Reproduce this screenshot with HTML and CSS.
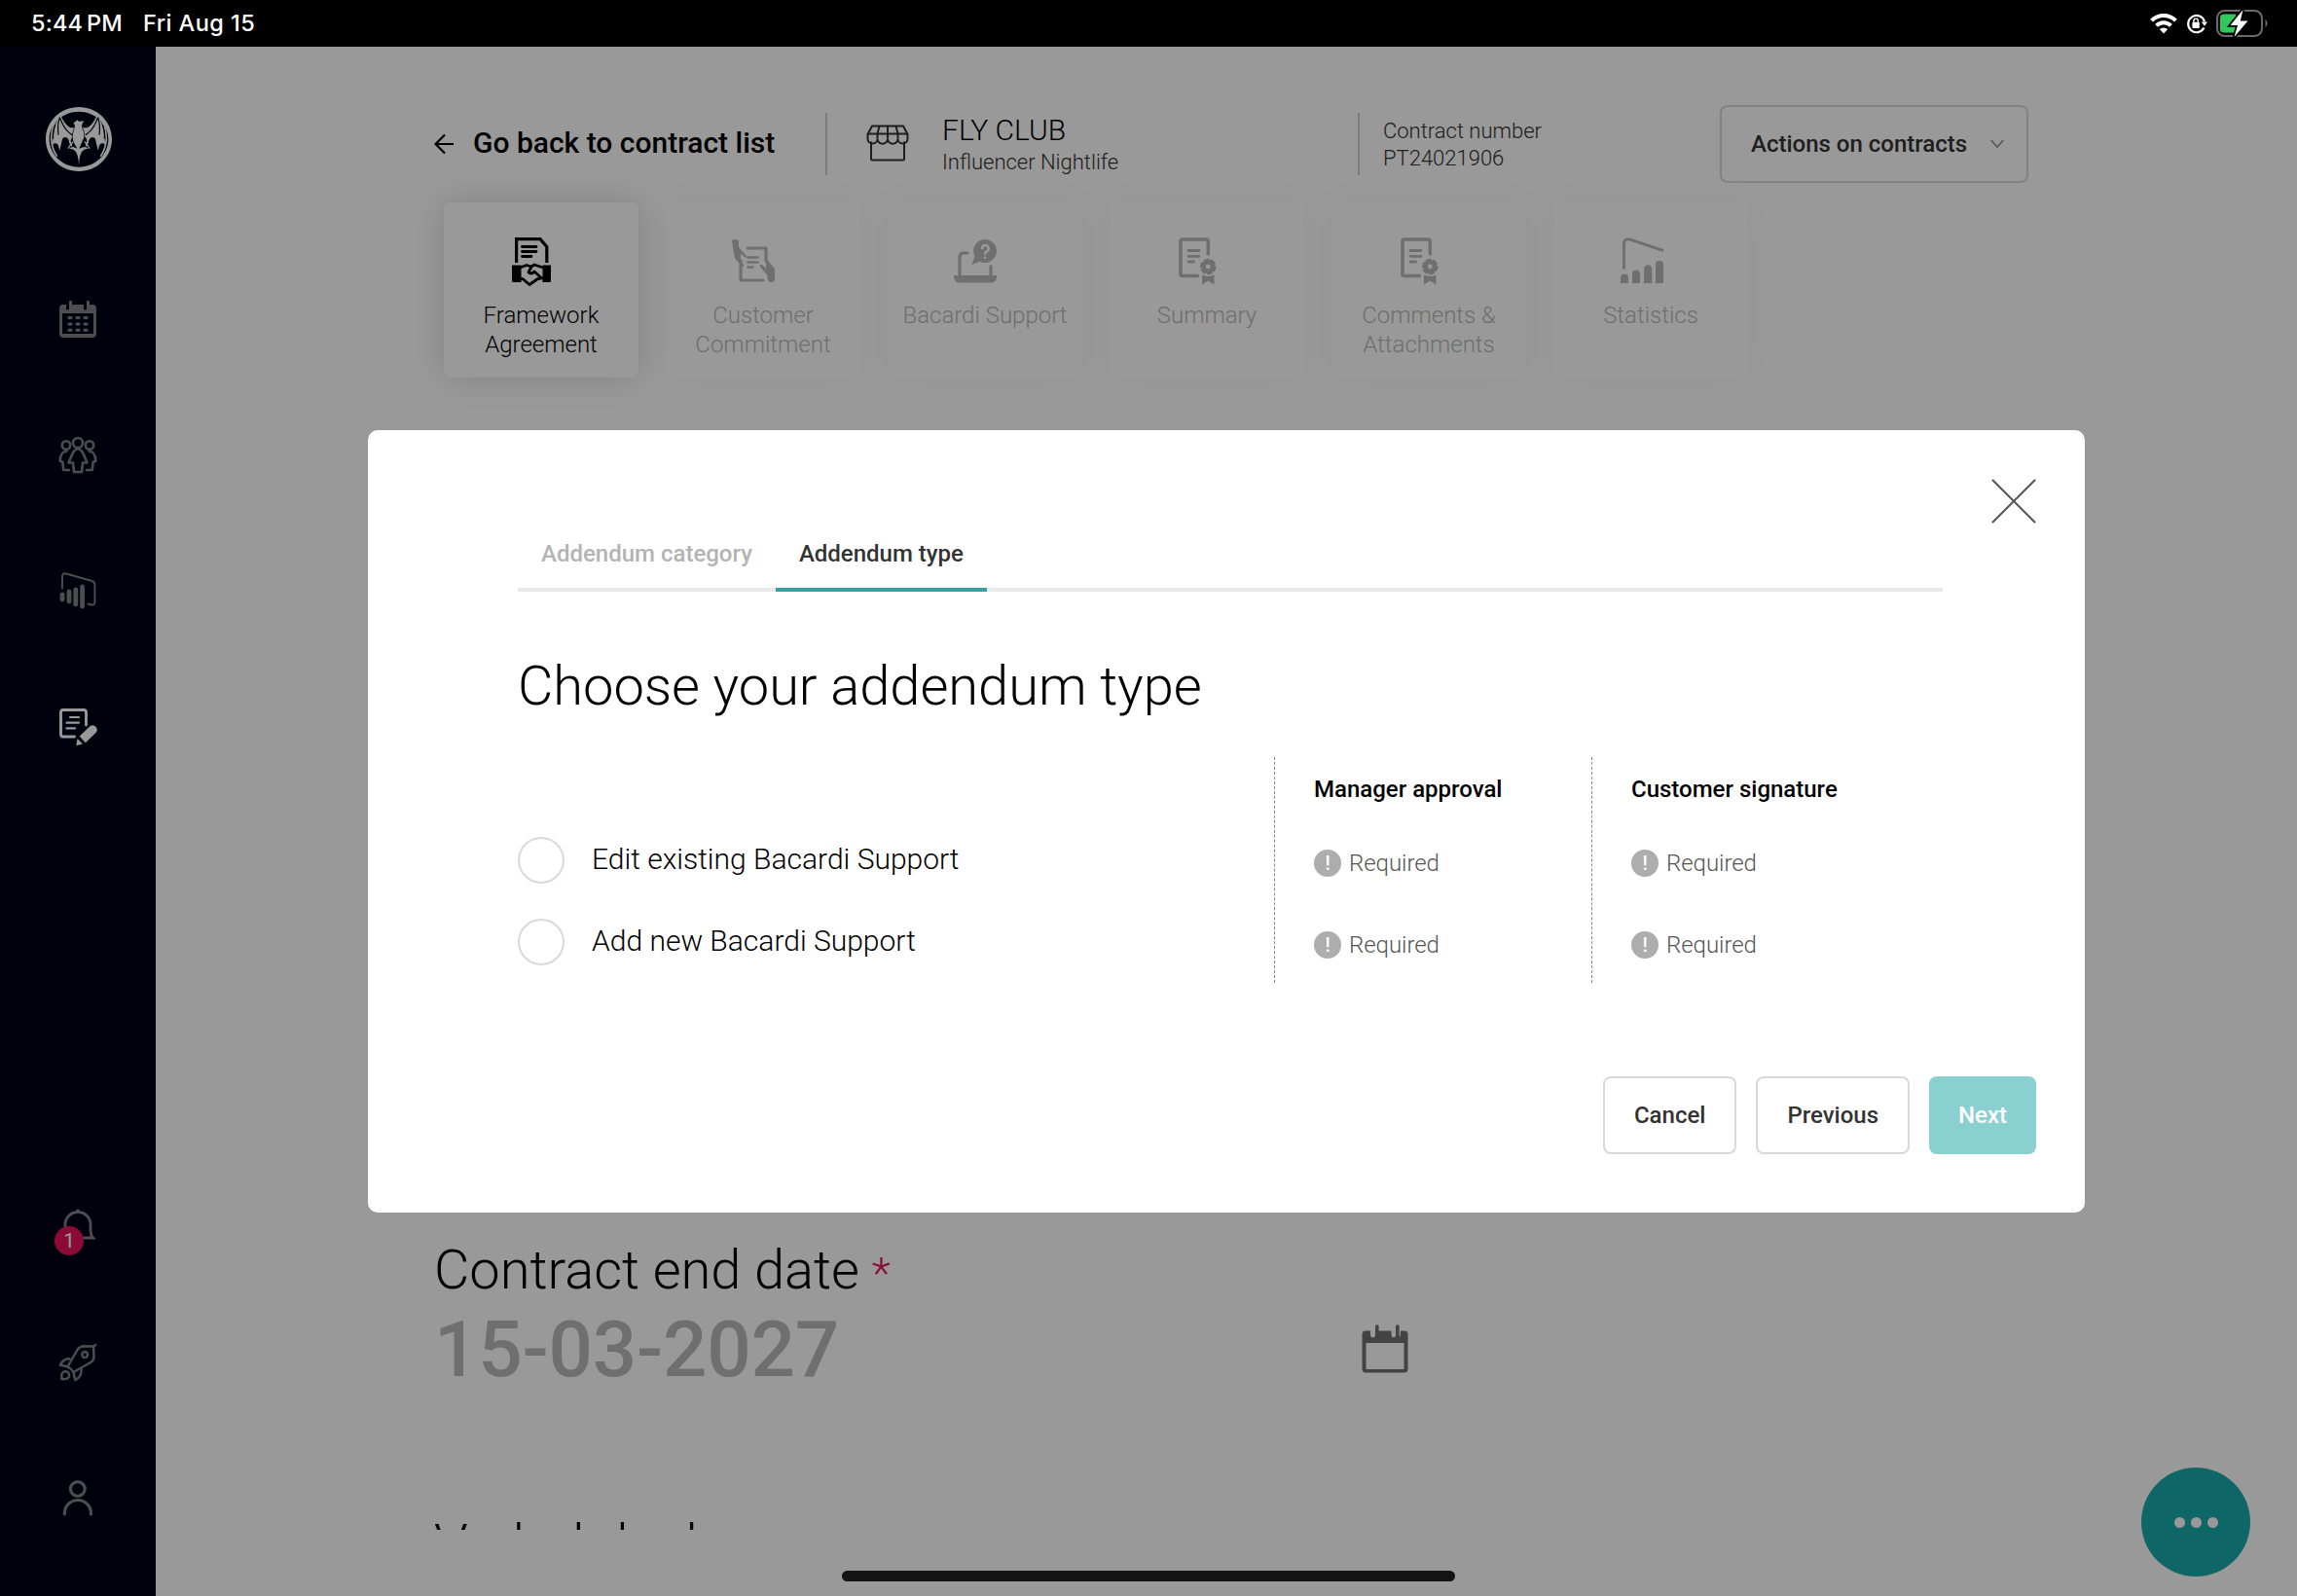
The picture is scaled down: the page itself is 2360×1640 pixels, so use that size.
FILE: index.html
```html
<!DOCTYPE html>
<html lang="en">
<head>
<meta charset="utf-8">
<title>Contract</title>
<link rel="stylesheet" href="styles.css">
</head>
<body>
<header class="status">
  <div class="status-left"><span class="status-time">5:44<i class="thin"></i>PM</span><span class="status-date">Fri Aug 15</span></div>
  <div class="status-right">
    <svg class="wifi" viewBox="0 0 28 22" width="28" height="22"><g fill="none" stroke="#fff" stroke-width="4"><path d="M1.6 8.2a17.6 17.6 0 0 1 24.8 0"/><path d="M6.6 13.4a10.4 10.4 0 0 1 14.8 0"/></g><path d="M14 21.5l-4.2-4.4a6 6 0 0 1 8.4 0z" fill="#fff"/></svg>
    <svg class="lock" viewBox="0 0 22 22" width="22" height="22"><path d="M18.4 15.6a8.6 8.6 0 1 1 .6-6.5" fill="none" stroke="#fff" stroke-width="2.2"/><path d="M15.8 9.6h6.2l-3 4.2z" fill="#fff"/><rect x="6.4" y="9.8" width="7.4" height="6.2" rx="1" fill="#fff"/><path d="M7.9 10V8.3a2.2 2.2 0 0 1 4.4 0V10" fill="none" stroke="#fff" stroke-width="1.4"/></svg>
    <svg class="battery" viewBox="0 0 54 30" width="54" height="30"><rect x="1" y="2" width="46" height="26" rx="7.500" fill="none" stroke="#6b6b6b" stroke-width="2"/><path d="M50.500 10.500q4 4.500 0 9z" fill="#6b6b6b"/><path d="M8 5.500H20v19H8Q4 24.500 4 20.500V9.500Q4 5.500 8 5.500z" fill="#34c759"/><path d="M27.500 1L14.500 17h7.500l-3.500 12 14-16.500h-7.700z" fill="#fff" stroke="#000" stroke-width="3.500" paint-order="stroke"/></svg>
  </div>
</header>

<div class="app">
  <nav class="sidebar">
    <svg class="logo" viewBox="141 330 204 198" width="68" height="66">
      <path fill="#fff" fill-rule="evenodd" d="M243 330c56 0 102 44 102 99s-46 99-102 99-102-44-102-99 46-99 102-99zM243 344c-50 0-91 38-91 85s41 86 91 86 91-39 91-86-41-85-91-85z"/>
      <path fill="none" stroke="#fff" stroke-width="5" d="M184 356q-26 28-26 72 2 32 18 54M302 356q26 28 26 72-2 32-18 54"/>
      <g fill="#fff"><path d="M186 354q14 30 28 38 10 4 18 0l-2 30q-8-6-12 12l6 20q-10-4-12-22-6-12-14-8-6 0-8 14l-6 26q-4-22-12-22-6-2-10 4-2-52 24-92z"/><path d="M300 354q-14 30-28 38-10 4-18 0l2 30q8-6 12 12l-6 20q10-4 12-22 6-12 14-8 6 0 8 14l6 26q4-22 12-22 6-2 10 4 2-52-24-92z"/>
      <path stroke="#00020d" stroke-width="4" paint-order="stroke" d="M226 380l12-10 6 5 14-3-6 14 2 12q8 12 4 28l-7 16-7 16q20-10 28 0-18 2-22 14-6 14-7 38-1-24-7-38-4-12-22-14 8-10 24 0l-10-18q-9-20 1-42l2-12z"/></g>
      <path fill="none" stroke="#00020d" stroke-width="3.500" d="M184 362q-8 24-4 54M184 362q12 30 24 42t15 12M302 362q8 24 4 54M302 362q-12 30-24 42t-15 12M170 384q-8 26-6 44M316 384q8 26 6 44"/>
      <path fill="none" stroke="#fff" stroke-width="4" d="M226 436l-8 10-8 12M260 436l8 10 8 12"/>
    </svg>
    <div class="nav-main">
      <svg class="nav-icon" viewBox="0 0 40 40"><path fill="currentColor" fill-rule="evenodd" d="M5 5h3v4a1.500 1.500 0 0 0 3 0V1h3v4h12v4a1.500 1.500 0 0 0 3 0V1h3v4h3a4 4 0 0 1 4 4v26a4 4 0 0 1-4 4H5a4 4 0 0 1-4-4V9a4 4 0 0 1 4-4zM4 14v21h32V14z"/><g fill="currentColor"><ellipse cx="12" cy="18.500" rx="2.800" ry="1.700"/><ellipse cx="20" cy="18.500" rx="2.800" ry="1.700"/><ellipse cx="28" cy="18.500" rx="2.800" ry="1.700"/><ellipse cx="12" cy="25" rx="2.800" ry="1.700"/><ellipse cx="20" cy="25" rx="2.800" ry="1.700"/><ellipse cx="28" cy="25" rx="2.800" ry="1.700"/><ellipse cx="12" cy="31.200" rx="2.800" ry="1.700"/><ellipse cx="20" cy="31.200" rx="2.800" ry="1.700"/><ellipse cx="28" cy="31.200" rx="2.800" ry="1.700"/></g></svg>
      <svg class="nav-icon" viewBox="0 0 40 40"><g fill="none" stroke="currentColor" stroke-width="2.600" stroke-linecap="round" stroke-linejoin="round"><circle cx="20" cy="7" r="5"/><circle cx="8" cy="9.500" r="4.200"/><circle cx="32" cy="9.500" r="4.200"/><path d="M20 13.200c-3.200 0-4.500 2.300-6 6L10.500 27.500h4.500L16 37h8l1-9.500h4.500L26 19.200c-1.500-3.700-2.800-6-6-6z"/><path d="M8.500 15.500C4 16 2 18.500 1.700 25.500l2.600 1.200L5.300 35H11M31.500 15.500c4.500.5 6.500 3 6.800 10l-2.600 1.200L34.700 35H29"/></g></svg>
      <svg class="nav-icon" viewBox="0 0 40 40"><path fill="none" stroke="currentColor" stroke-width="1.900" stroke-linecap="round" d="M4 17.500V5.500Q4 1.500 8 2.500L34.500 10Q37.400 11 37.400 14V32Q37.400 36.200 30.500 33.500"/><g stroke="currentColor" stroke-width="4.800" stroke-linecap="round"><path d="M4 24v5M11 21v10M17.800 19v15M24.600 16v20"/></g></svg>
      <svg class="nav-icon active" viewBox="0 0 40 40"><path fill="none" stroke="currentColor" stroke-width="2.900" stroke-linecap="round" d="M28.500 18V5q0-2.500-2.500-2.500H5Q2.500 2.500 2.500 5v22.500Q2.500 30 5 30h11.500"/><path stroke="currentColor" stroke-width="2.200" stroke-linecap="round" d="M12 10h9M8.500 15.700H21M8.500 21.400H17"/><path fill="currentColor" d="M21.700 29.500L32.200 19.500a4.500 4.500 0 0 1 6.200 6.500L27.800 36.200zM19.500 32l5.500 5.500-6.700 1.500z"/></svg>
    </div>
    <div class="nav-foot">
      <div class="bell"><svg class="nav-icon" viewBox="0 0 40 40"><path fill="none" stroke="currentColor" stroke-width="2.800" d="M20 2.500V6M6 32h29.500q-2.300-2.500-2.500-8V18.500a13 13 0 0 0-26 0V24q0 5-1 8z"/></svg><span class="badge">1</span></div>
      <svg class="nav-icon" viewBox="0 0 40 40"><g fill="none" stroke="currentColor" stroke-width="2.500" stroke-linejoin="round"><path d="M9.500 24.500L19.500 7Q22 3.300 26 3.200L36 3.500 36.500 14Q36.500 18 33 20L15.500 30Q13.500 26.500 9.500 24.500z"/><path d="M36 3.500L39 1.500M12.500 16.500Q6 15 1.800 22.500L9.500 24.500M15.500 30Q16 34 17.500 38 24.500 34.500 23.500 26"/><circle cx="27.200" cy="12" r="2.900"/><path d="M3.300 37v-4a3.900 3.900 0 1 1 3.900 4z"/></g></svg>
      <svg class="nav-icon" viewBox="0 0 40 40"><g fill="none" stroke="currentColor" stroke-width="3.200" stroke-linecap="round"><circle cx="19.800" cy="10" r="7.400"/><path d="M6.400 35.800V35a13.500 13.500 0 0 1 27 0v.8"/></g></svg>
    </div>
  </nav>

  <main class="page">
    <div class="topline">
      <div class="back"><svg viewBox="0 0 22 22" width="22" height="22"><path fill="none" stroke="#000" stroke-width="2.200" d="M11 1.500L1.500 11 11 20.500M1.500 11H20"/></svg><span>Go back to contract list</span></div>
      <div class="customer">
        <svg viewBox="0 0 44 40" width="44" height="40"><g fill="none" stroke="#333" stroke-width="2"><path d="M6 2.500H38L42.500 11v4.500a5 5 0 0 1-10 0 5 5 0 0 1-10.500 0 5 5 0 0 1-10.500 0 5 5 0 0 1-10 0V11z"/><path d="M1.500 10.500h41M13.500 2.500l-2 8v5M22 2.500v13M30.500 2.500l2 8v5M5 18.500V36q0 1.500 1.500 1.500h31q1.500 0 1.500-1.500V18.500"/></g></svg>
        <div class="customer-text"><span class="customer-name">FLY CLUB</span><span class="customer-kind">Influencer Nightlife</span></div>
      </div>
      <div class="number"><span>Contract number</span><span>PT24021906</span></div>
      <div class="actions"><span>Actions on contracts</span><svg viewBox="0 0 14 10" width="14" height="10"><path fill="none" stroke="#999" stroke-width="1.800" d="M.8 1L7 8.200 13.200 1"/></svg></div>
    </div>

    <div class="steps">
      <div class="step current"><svg class="step-icon" viewBox="0 0 48 48"><path fill="none" stroke="currentColor" stroke-width="3.200" d="M8.600 27V2.600H33L39.800 10.500V27"/><path stroke="currentColor" stroke-width="2.800" stroke-linecap="round" d="M14.500 10.500H29M14.500 15.500H29M14.500 20.500H24"/><path fill="currentColor" d="M4 29.500h9.500V47H5.500Q4 47 4 45.500zM35.500 29.500H44v16q0 1.500-1.500 1.500h-7z"/><path fill="none" stroke="currentColor" stroke-width="2.800" stroke-linejoin="round" d="M12 32l7-2.500 5 1.500-3 6q3 2.500 6-1l6.500 6M24 31l3-2 9 3M12 43.500h3l7 6 5-3.500 3.500-2.500 5.500-1"/></svg><span>Framework Agreement</span></div>
      <div class="step"><svg class="step-icon" viewBox="0 0 48 48"><path fill="none" stroke="currentColor" stroke-width="3.200" stroke-linejoin="round" stroke-linecap="round" d="M18 12H37V24.500L42 31M11 25V45H34"/><path stroke="currentColor" stroke-width="2.600" stroke-linecap="round" d="M18.500 21.500h10M18.500 26.500h10M18.500 31.500h5"/><path fill="currentColor" d="M2 5q0-2 3-2 4 0 4 3v5l8 9q1 3-2 1l-4-3v7l3 4v3L8 26q-4-4-4-9zM46 34v10q0 3-4 3-3 0-3.500-3v-4L31 31q-1-3 2-2l4 4v-7l5 4q4 2 4 4z"/></svg><span>Customer Commitment</span></div>
      <div class="step"><svg class="step-icon" viewBox="0 0 48 48"><path fill="none" stroke="currentColor" stroke-width="3.200" stroke-linecap="round" d="M16 17h-4q-4 0-4 4V41M40 30.500V41"/><path fill="currentColor" d="M2 40h44v2q-1 5.500-6 5.500H8Q3 47.500 2 42zM34 3a12 12 0 1 1-5.500 22.700L20.500 29l3-8.500A12 12 0 0 1 34 3z"/><path class="hole" fill="none" stroke-width="2.600" stroke-linecap="round" d="M31 12.300a3.300 3.300 0 1 1 4.800 3q-1.700.8-1.700 2.500M34 21.500v.2"/></svg><span>Bacardi Support</span></div>
      <div class="step"><svg class="step-icon" viewBox="0 0 48 48"><path fill="none" stroke="currentColor" stroke-width="3.600" stroke-linecap="round" d="M35.300 18V5q0-2-2-2H9Q7 3 7 5V38.500q0 2 2 2H24.500"/><path stroke="currentColor" stroke-width="2.800" stroke-linecap="round" d="M15 14.500h11M15 20.300h11M15 26h5.500"/><g fill="none" stroke="currentColor"><circle cx="35.300" cy="31" r="4.700" stroke-width="4.600"/><circle cx="35.300" cy="31" r="7" stroke-width="2.600" stroke-dasharray="3.700 3.630" stroke-linecap="round"/></g><path fill="currentColor" d="M29 39.500q6 2.500 12.500 0V49.500l-6.200-4-6.300 4z"/></svg><span>Summary</span></div>
      <div class="step"><svg class="step-icon" viewBox="0 0 48 48"><path fill="none" stroke="currentColor" stroke-width="3.600" stroke-linecap="round" d="M35.300 18V5q0-2-2-2H9Q7 3 7 5V38.500q0 2 2 2H24.500"/><path stroke="currentColor" stroke-width="2.800" stroke-linecap="round" d="M15 14.500h11M15 20.300h11M15 26h5.500"/><g fill="none" stroke="currentColor"><circle cx="35.300" cy="31" r="4.700" stroke-width="4.600"/><circle cx="35.300" cy="31" r="7" stroke-width="2.600" stroke-dasharray="3.700 3.630" stroke-linecap="round"/></g><path fill="currentColor" d="M29 39.500q6 2.500 12.500 0V49.500l-6.200-4-6.300 4z"/></svg><span>Comments &amp; Attachments</span></div>
      <div class="step"><svg class="step-icon" viewBox="0 0 48 48"><path fill="none" stroke="currentColor" stroke-width="2.900" d="M6.500 33.500V8Q6.500 1.500 13 3.200L47 14.500"/><path fill="currentColor" d="M3 48v-5.500a4 4 0 0 1 8 0V48zM15 48V38.500a4 4 0 0 1 8 0V48zM27 48V33.500a4 4 0 0 1 8.300 0V48zM39 48V28.700a4 4 0 0 1 8 0V48z"/></svg><span>Statistics</span></div>
    </div>

    <section class="form">
      <div class="label">Contract end date <span class="star">*</span></div>
      <div class="date"><span>15-03-2027</span><svg viewBox="0 0 48 50" width="48" height="50"><path fill="#717171" fill-rule="evenodd" d="M4 6.500h5V11a2.500 2.500 0 0 0 5 0V2a1.800 1.800 0 0 1 3.600 0V6.500h13V11a2 2 0 0 0 4.400 0V2a1.800 1.800 0 0 1 3.600 0V11a1.500 1.500 0 0 0 1 1.500L40 6.500h4q3.500 0 3.500 3.500V45.500q0 4-3.500 4H4Q.5 49.500.5 45.500V10Q.5 6.500 4 6.500zM4.500 19V46h39V19z"/></svg></div>
      <div class="label next-label">Verbal deal</div>
    </section>
  </main>

  <button class="fab" aria-label="More"><i></i><i></i><i></i></button>

  <div class="overlay">
    <div class="modal">
      <svg class="close" viewBox="0 0 48 48" width="48" height="48"><path stroke="#555" stroke-width="2" stroke-linecap="round" d="M2.500 2.500l43 43M45.500 2.500l-43 43"/></svg>
      <div class="modal-body">
        <div class="tabs"><div class="tab">Addendum category</div><div class="tab selected">Addendum type</div></div>
        <h1>Choose your addendum type</h1>
        <div class="table">
          <div class="col options">
            <div class="head"></div>
            <label class="row"><i class="radio"></i><span class="option-name">Edit existing Bacardi Support</span></label>
            <label class="row"><i class="radio"></i><span class="option-name">Add new Bacardi Support</span></label>
          </div>
          <div class="col ruled">
            <div class="head">Manager approval</div>
            <div class="row req"><b class="mark">!</b><span>Required</span></div>
            <div class="row req"><b class="mark">!</b><span>Required</span></div>
          </div>
          <div class="col ruled">
            <div class="head">Customer signature</div>
            <div class="row req"><b class="mark">!</b><span>Required</span></div>
            <div class="row req"><b class="mark">!</b><span>Required</span></div>
          </div>
        </div>
      </div>
      <div class="buttons"><button class="btn">Cancel</button><button class="btn">Previous</button><button class="btn primary">Next</button></div>
    </div>
  </div>
  <div class="home-bar"></div>
</div>
</body>
</html>
```
FILE: styles.css
```css
* { box-sizing: border-box; }
body {
  margin: 0;
  width: 2360px;
  height: 1640px;
  overflow: hidden;
  display: flex;
  flex-direction: column;
  font-family: Roboto, "Liberation Sans", sans-serif;
  font-weight: 300;
  color: #000;
  background: #fff;
}
svg { display: block; flex: none; }
button { font: inherit; letter-spacing: inherit; }

/* device status bar */
.status {
  height: 48px;
  flex: none;
  background: #000;
  color: #fff;
  display: flex;
  align-items: center;
  justify-content: space-between;
  padding: 0 29px 0 32px;
  font: 500 23.5px/48px Inter, "Liberation Sans", sans-serif;
}
.status-left { display: flex; gap: 21px; }
.status-time { letter-spacing: .15px; }
.status-date { letter-spacing: .45px; }
.thin { display: inline-block; width: 4px; }
.status-right { display: flex; align-items: center; }
.lock { margin: 0 9px 0 9px; }

.app { position: relative; flex: 1; display: flex; min-height: 0; }

/* navigation rail */
.sidebar {
  width: 160px;
  flex: none;
  background: #000314;
  color: #808086;
  display: flex;
  flex-direction: column;
  align-items: center;
  padding: 62px 0 80px;
}
.logo { margin-left: 2px; }
.nav-icon { width: 40px; height: 40px; }
.nav-main { display: flex; flex-direction: column; gap: 99.5px; margin-top: 132px; }
.active { color: #fff; }
.nav-foot { display: flex; flex-direction: column; gap: 100px; margin-top: auto; }
.bell { position: relative; }
.badge {
  position: absolute;
  left: -4px;
  top: 20px;
  width: 30px;
  height: 30px;
  border-radius: 50%;
  background: #e8125a;
  color: #fff;
  font-size: 20px;
  font-weight: 400;
  line-height: 30px;
  text-align: center;
}

/* page */
.page {
  flex: 1;
  min-width: 0;
  height: 1524px;
  overflow: hidden;
  padding: 60px 276px 0 286px;
  display: flex;
  flex-direction: column;
}
.topline { display: flex; height: 80px; align-items: center; flex: none; }
.back { display: flex; align-items: center; gap: 18px; width: 402px; font-size: 30px; font-weight: 500; }
.back span { padding-bottom: 3px; white-space: nowrap; }
.customer {
  display: flex;
  align-items: center;
  gap: 34px;
  height: 64px;
  width: 547px;
  padding-left: 40px;
  border-left: 2px solid #cfcfcf;
}
.customer svg { margin-top: -2px; }
.customer-text { display: flex; flex-direction: column; }
.customer-name { font-size: 30px; line-height: 36px; padding-bottom: 1px; }
.customer-kind { font-size: 22px; line-height: 28px; color: #333; }
.number {
  display: flex;
  flex-direction: column;
  justify-content: center;
  height: 64px;
  padding: 2px 0 0 24px;
  border-left: 2px solid #cfcfcf;
  font-size: 22px;
  line-height: 28px;
  color: #333;
}
.actions {
  display: flex;
  align-items: center;
  justify-content: space-between;
  width: 317px;
  height: 80px;
  margin-left: auto;
  padding: 0 23px 0 30px;
  border: 2px solid #d9d9d9;
  border-radius: 8px;
  font-size: 24px;
  font-weight: 500;
  color: #333;
}

.steps { display: flex; gap: 28px; margin: 20px 0 0 10px; flex: none; }
.step {
  width: 200px;
  height: 180px;
  padding: 35px 10px 0;
  border-radius: 8px;
  background: #fff;
  box-shadow: 0 0 32px rgba(0, 0, 0, .04);
  color: #b9b9b9;
  display: flex;
  flex-direction: column;
  align-items: center;
  font-size: 24px;
  line-height: 30px;
  text-align: center;
}
.step.current { color: #000; box-shadow: 0 0 32px rgba(0, 0, 0, .15); }
.step-icon { width: 48px; height: 48px; margin: 0 20px 18px 0; overflow: visible; }
.hole { stroke: #fff; }

.form { margin-top: auto; flex: none; height: 300px; }
.label { height: 66px; font-size: 56px; line-height: 66px; letter-spacing: -.03px; white-space: nowrap; }
.star { color: #e8125a; font-size: 45px; line-height: 0; margin-left: -1px; }
.date {
  display: flex;
  align-items: center;
  justify-content: space-between;
  width: 1001px;
  height: 94px;
  margin-top: 2px;
  font-size: 80px;
  font-weight: 500;
  line-height: 94px;
  letter-spacing: -.2px;
  color: #b9b9b9;
}
.date svg { margin-bottom: 3px; }
.next-label { margin-top: 120px; }

.fab {
  position: absolute;
  right: 48px;
  bottom: 20px;
  width: 112px;
  height: 112px;
  border: 0;
  border-radius: 50%;
  background: #1aabab;
  display: flex;
  align-items: center;
  justify-content: center;
  gap: 6px;
}
.fab i { width: 11px; height: 11px; border-radius: 50%; background: #fff; }

/* dialog */
.overlay {
  position: absolute;
  inset: 0;
  padding-left: 160px;
  background: rgba(0, 0, 0, .4);
  display: flex;
  align-items: center;
  justify-content: center;
}
.modal {
  position: relative;
  width: 1764px;
  height: 804px;
  border-radius: 10px;
  background: #fff;
  padding-top: 113px;
}
.close { position: absolute; right: 49px; top: 49px; }
.modal-body { padding: 0 146px 0 154px; }
.tabs {
  display: flex;
  box-shadow: inset 0 -4px #e9e9e9;
  font-size: 24px;
  line-height: 28px;
  font-weight: 500;
  color: #b3b3b3;
}
.tab { padding: 0 24px 21px; border-bottom: 4px solid transparent; }
.tab.selected { color: #333; border-color: #36a1a0; }
h1 { margin: 64px 0 40px; font-size: 56px; line-height: 66px; font-weight: 300; letter-spacing: -.04px; }
.table { display: flex; height: 232px; }
.col { width: 326px; }
.options { width: 777px; }
.ruled { border-left: 1px dashed #888; padding-left: 40px; }
.head { height: 64px; line-height: 66px; font-size: 24px; font-weight: 500; }
.row { display: flex; align-items: center; height: 84px; font-size: 30px; }
.option-name { padding-bottom: 3px; }
.radio { width: 48px; height: 48px; border: 2px solid #d9d9d9; border-radius: 50%; margin-right: 28px; }
.req { padding-top: 6px; font-size: 24px; color: #555; gap: 8px; letter-spacing: -.05px; }
.mark {
  width: 28px;
  height: 28px;
  border-radius: 50%;
  background: #adadad;
  color: #fff;
  font-size: 20px;
  line-height: 29px;
  font-weight: 500;
  text-align: center;
}
.buttons { display: flex; justify-content: flex-end; gap: 20px; margin-top: 96px; padding-right: 50px; }
.btn {
  height: 80px;
  padding: 0 30px;
  border: 2px solid #d9d9d9;
  border-radius: 8px;
  background: #fff;
  font-size: 24px;
  font-weight: 500;
  color: #333;
}
.primary { border: 0; background: #8ad0d0; color: #fff; }

.home-bar {
  position: absolute;
  left: 865px;
  bottom: 15px;
  width: 630px;
  height: 11px;
  border-radius: 6px;
  background: #141414;
}
```
